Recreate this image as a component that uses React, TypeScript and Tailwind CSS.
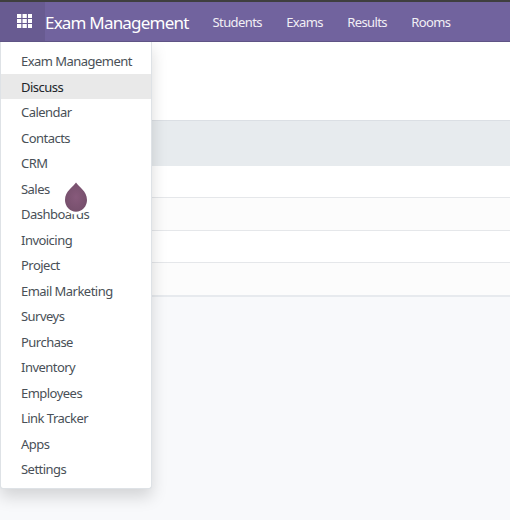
const apps = [
  'Exam Management', 'Discuss', 'Calendar', 'Contacts', 'CRM', 'Sales',
  'Dashboards', 'Invoicing', 'Project', 'Email Marketing', 'Surveys',
  'Purchase', 'Inventory', 'Employees', 'Link Tracker', 'Apps', 'Settings',
];

const sections = ['Students', 'Exams', 'Results', 'Rooms'];

function AppsIcon() {
  return (
    <svg width="15" height="14" viewBox="0 0 15 14" fill="#fff" className="block">
      {[0, 5, 10].map((y) =>
        [0, 5.5, 11].map((x) => <rect key={`${x}-${y}`} x={x} y={y} width="4.3" height="4" />),
      )}
    </svg>
  );
}

function Navbar() {
  return (
    <header className="flex h-[42px] border-t-2 border-b border-t-[#3f3f3f] border-b-[#5f5485] bg-[#71639e] text-white">
      <button className="flex w-[45px] items-start bg-[#685b91] pt-3 pl-[17px]">
        <AppsIcon />
      </button>
      <span className="w-[155px] text-[17px] leading-[42px] tracking-[-0.8px] whitespace-nowrap">Exam Management</span>
      <nav className="flex gap-[24.3px] pl-[12.5px] text-[13px] leading-[41px] tracking-[-0.6px] text-[#f1eff5]">
        {sections.map((s) => (
          <span key={s} className="whitespace-nowrap">{s}</span>
        ))}
      </nav>
    </header>
  );
}

function Table() {
  return (
    <main className="bg-white pt-[78px]">
      <div className="h-[46px] border-t border-[#dbdfe4] bg-[#e7ebee]" />
      <div className="h-8 border-b border-[#e5e7ea]" />
      <div className="h-[33px] border-b border-[#e5e7ea] bg-[#fcfcfc]" />
      <div className="h-8 border-b border-[#e5e7ea]" />
      <div className="h-[34px] border-b-2 border-[#e7eaee] bg-[#fcfcfc]" />
    </main>
  );
}

function AppsMenu() {
  return (
    <ul className="absolute top-[41px] left-0 h-[448px] w-[152px] rounded-b-[3px] border border-[#dee2e6] border-t-transparent bg-white bg-clip-padding pt-[6.4px] text-[13px] leading-[25.5px] tracking-[-0.53px] text-[#495057] shadow-[0_8px_16px_rgba(0,0,0,0.15)]">
      {apps.map((a) => (
        <li key={a} className={`h-[25.5px] pt-[0.9px] pl-5 whitespace-nowrap ${a === 'Discuss' ? 'bg-[#e9e9e9] text-[#212529]' : ''}`}>
          {a}
        </li>
      ))}
    </ul>
  );
}

function TourDrop() {
  return (
    <svg className="absolute top-[180px] left-[62px] overflow-visible" width="28" height="36" viewBox="0 0 28 36">
      <defs>
        <radialGradient id="drop">
          <stop offset="0" stopColor="#875a7b" />
          <stop offset="1" stopColor="#77506d" />
        </radialGradient>
      </defs>
      <path d="M14 2.5C16.5 6.5 25 11 25 20a11 11.7 0 0 1-22 0C3 11 11.5 6.5 14 2.5Z" fill="url(#drop)" stroke="#fff" strokeWidth="6" strokeLinejoin="round" paintOrder="stroke" />
    </svg>
  );
}

export default function App() {
  return (
    <div className="relative h-[520px] w-[510px] overflow-hidden bg-[#f8f9fb] font-['Noto_Sans','Open_Sans',sans-serif]">
      <div className="relative z-10">
        <Navbar />
      </div>
      <Table />
      <AppsMenu />
      <TourDrop />
    </div>
  );
}
